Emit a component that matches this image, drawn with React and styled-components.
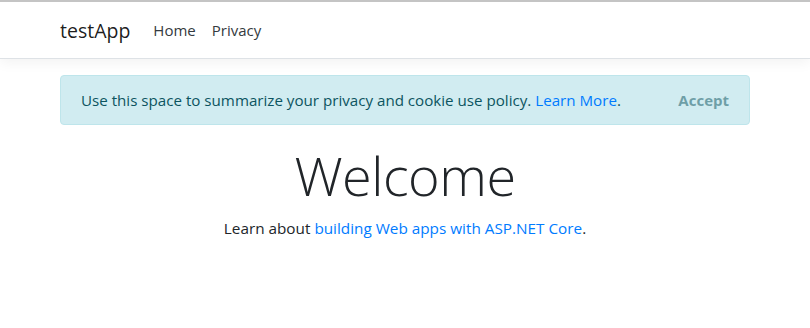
import React from 'react';
import styled, { createGlobalStyle } from 'styled-components';

const GlobalStyle = createGlobalStyle`
  html, body {
    margin: 0;
    padding: 0;
    background: #fff;
  }
  body {
    font-family: "Open Sans", "Noto Sans", sans-serif;
    font-size: 16px;
    line-height: 1.5;
    color: #212529;
  }
`;

const Header = styled.header`
  border-top: 2px solid #c4c4c4;
  border-bottom: 1px solid #dee2e6;
  box-shadow: 0 0.25rem 0.75rem rgba(0, 0, 0, 0.05);
  background: #fff;
  margin-bottom: 16px;
`;

const Container = styled.div`
  max-width: 690px;
  margin: 0 auto;
  padding: 0 15px;
`;

const Navbar = styled(Container)`
  display: flex;
  align-items: center;
  height: 55px;
  padding-top: 1px;
`;

const Brand = styled.a`
  font-size: 19.5px;
  color: rgba(0, 0, 0, 0.9);
  text-decoration: none;
  margin-right: 15px;
`;

const NavLink = styled.a`
  color: #343a40;
  text-decoration: none;
  padding: 0 8px;
  font-size: 15px;
`;

const Alert = styled.div`
  display: flex;
  align-items: center;
  justify-content: space-between;
  background: #d1ecf1;
  border: 1px solid #bee5eb;
  color: #0c5460;
  border-radius: 4px;
  padding: 12px 20px;
  font-size: 15.15px;
  line-height: 24px;
`;

const Link = styled.a`
  color: #007bff;
  text-decoration: none;
`;

const AcceptButton = styled.button`
  background: transparent;
  border: 0;
  padding: 0;
  font-family: inherit;
  font-size: 15px;
  font-weight: 700;
  color: #0c5460;
  opacity: 0.5;
  cursor: pointer;
`;

const Main = styled.main`
  text-align: center;
  padding-top: 18px;
`;

const Title = styled.h1`
  font-size: 54px;
  font-weight: 300;
  letter-spacing: -0.5px;
  line-height: 1.2;
  margin: 0 0 9px;
  color: #212529;
`;

const Lead = styled.p`
  margin: 0;
  font-size: 15.3px;
`;

export default function App() {
  return (
    <>
      <GlobalStyle />
      <Header>
        <Navbar>
          <Brand href="#">testApp</Brand>
          <NavLink href="#">Home</NavLink>
          <NavLink href="#">Privacy</NavLink>
        </Navbar>
      </Header>
      <Container>
        <Alert>
          <span>
            Use this space to summarize your privacy and cookie use policy.{' '}
            <Link href="#">Learn More</Link>.
          </span>
          <AcceptButton type="button">Accept</AcceptButton>
        </Alert>
        <Main>
          <Title>Welcome</Title>
          <Lead>
            Learn about <Link href="#">building Web apps with ASP.NET Core</Link>.
          </Lead>
        </Main>
      </Container>
    </>
  );
}
